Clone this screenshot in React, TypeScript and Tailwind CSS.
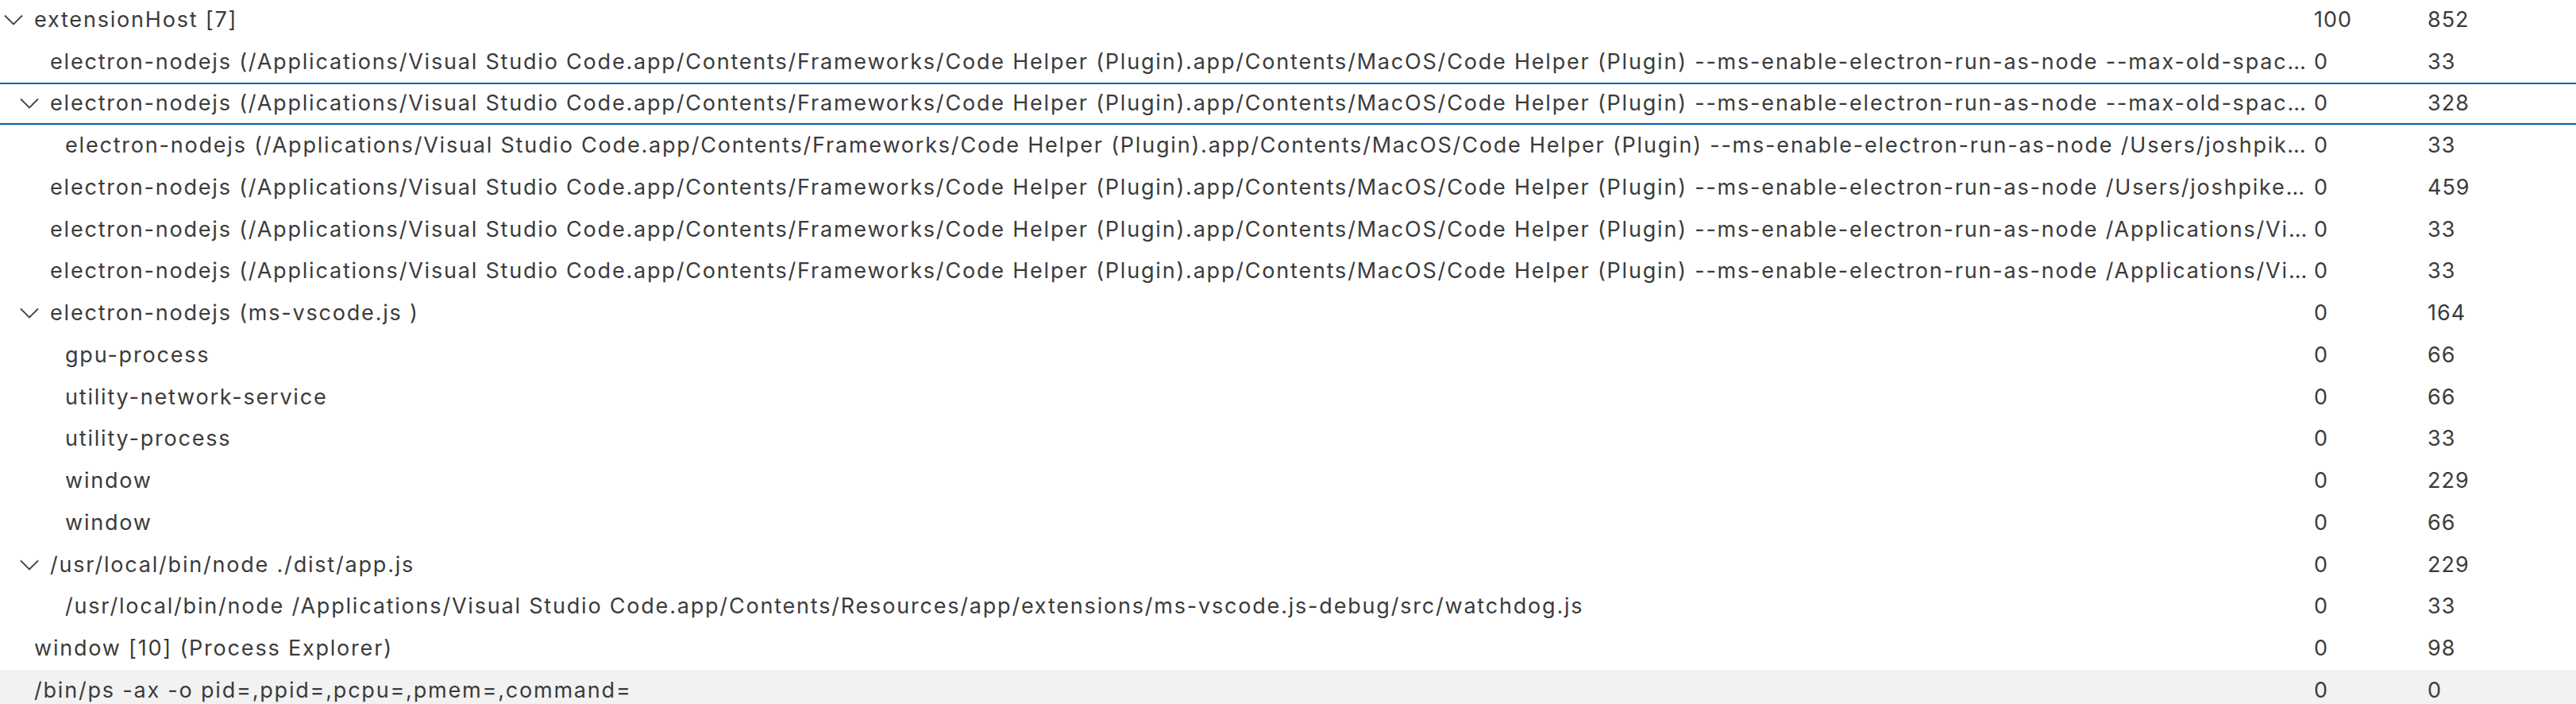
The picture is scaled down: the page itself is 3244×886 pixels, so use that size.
type Proc = {
  name: string
  cpu: string
  mem: string
  level: number
  expanded?: boolean
  focused?: boolean
  hover?: boolean
}

const helper =
  "electron-nodejs (/Applications/Visual Studio Code.app/Contents/Frameworks/Code Helper (Plugin).app/Contents/MacOS/Code Helper (Plugin) --ms-enable-electron-run-as-node"

const rows: Proc[] = [
  { name: "extensionHost [7]", cpu: "100", mem: "852", level: 0, expanded: true },
  { name: `${helper} --max-old-space-size=3072 /Applications/Visual Studio Code.app/Contents/Resources/app/extensions/node_modules/typescript/lib/tsserver.js`, cpu: "0", mem: "33", level: 1 },
  { name: `${helper} --max-old-space-size=3072 /Applications/Visual Studio Code.app/Contents/Resources/app/extensions/node_modules/typescript/lib/tsserver.js`, cpu: "0", mem: "328", level: 1, expanded: true, focused: true },
  { name: `${helper} /Users/joshpike/.vscode/extensions/typingsInstaller.js`, cpu: "0", mem: "33", level: 2 },
  { name: `${helper} /Users/joshpike/.vscode/extensions/server.js`, cpu: "0", mem: "459", level: 1 },
  { name: `${helper} /Applications/Visual Studio Code.app/Contents/Resources/app/extensions/json-language-features/server.js`, cpu: "0", mem: "33", level: 1 },
  { name: `${helper} /Applications/Visual Studio Code.app/Contents/Resources/app/extensions/markdown-language-features/server.js`, cpu: "0", mem: "33", level: 1 },
  { name: "electron-nodejs (ms-vscode.js )", cpu: "0", mem: "164", level: 1, expanded: true },
  { name: "gpu-process", cpu: "0", mem: "66", level: 2 },
  { name: "utility-network-service", cpu: "0", mem: "66", level: 2 },
  { name: "utility-process", cpu: "0", mem: "33", level: 2 },
  { name: "window", cpu: "0", mem: "229", level: 2 },
  { name: "window", cpu: "0", mem: "66", level: 2 },
  { name: "/usr/local/bin/node ./dist/app.js", cpu: "0", mem: "229", level: 1, expanded: true },
  { name: "/usr/local/bin/node /Applications/Visual Studio Code.app/Contents/Resources/app/extensions/ms-vscode.js-debug/src/watchdog.js", cpu: "0", mem: "33", level: 2 },
  { name: "window [10] (Process Explorer)", cpu: "0", mem: "98", level: 0 },
  { name: "/bin/ps -ax -o pid=,ppid=,pcpu=,pmem=,command=", cpu: "0", mem: "0", level: 0, hover: true },
]

const indent = ["pl-0", "pl-[20px]", "pl-[39px]"]

const Chevron = () => (
  <svg width="24" height="14" viewBox="0 0 24 14" className="ml-[5px]">
    <polyline points="1,1.5 12,12.5 23,1.5" fill="none" stroke="#424242" strokeWidth="1.8" />
  </svg>
)

const ProcessRow = ({ row }: { row: Proc }) => {
  const bg = row.hover ? "bg-[#f2f2f2]" : "bg-white"
  const border = row.focused ? "border-y-2 border-[#005fb8]" : "border-y-2 border-transparent"
  return (
    <div className={`grid grid-cols-[2912px_144px_1fr] items-center h-[52.75px] ${bg} ${border}`}>
      <div className={`flex items-center min-w-0 overflow-hidden ${indent[row.level]}`}>
        <div className="w-[43px] shrink-0 flex items-center">
          {row.expanded && <Chevron />}
        </div>
        <span className="truncate pr-[2px]">{row.name}</span>
      </div>
      <div className="pl-[2px] tracking-[1px]">{row.cpu}</div>
      <div className="pl-[1px] tracking-[1px]">{row.mem}</div>
    </div>
  )
}

export default function App() {
  return (
    <div className="w-[3244px] h-[886px] overflow-hidden bg-white">
      <div className="-mt-[1.5px] text-[27px] leading-[32px] tracking-[1.8px] text-[#3b3b3b] font-['Inter',sans-serif]">
        {rows.map((r, i) => (
          <ProcessRow key={i} row={r} />
        ))}
      </div>
    </div>
  )
}
